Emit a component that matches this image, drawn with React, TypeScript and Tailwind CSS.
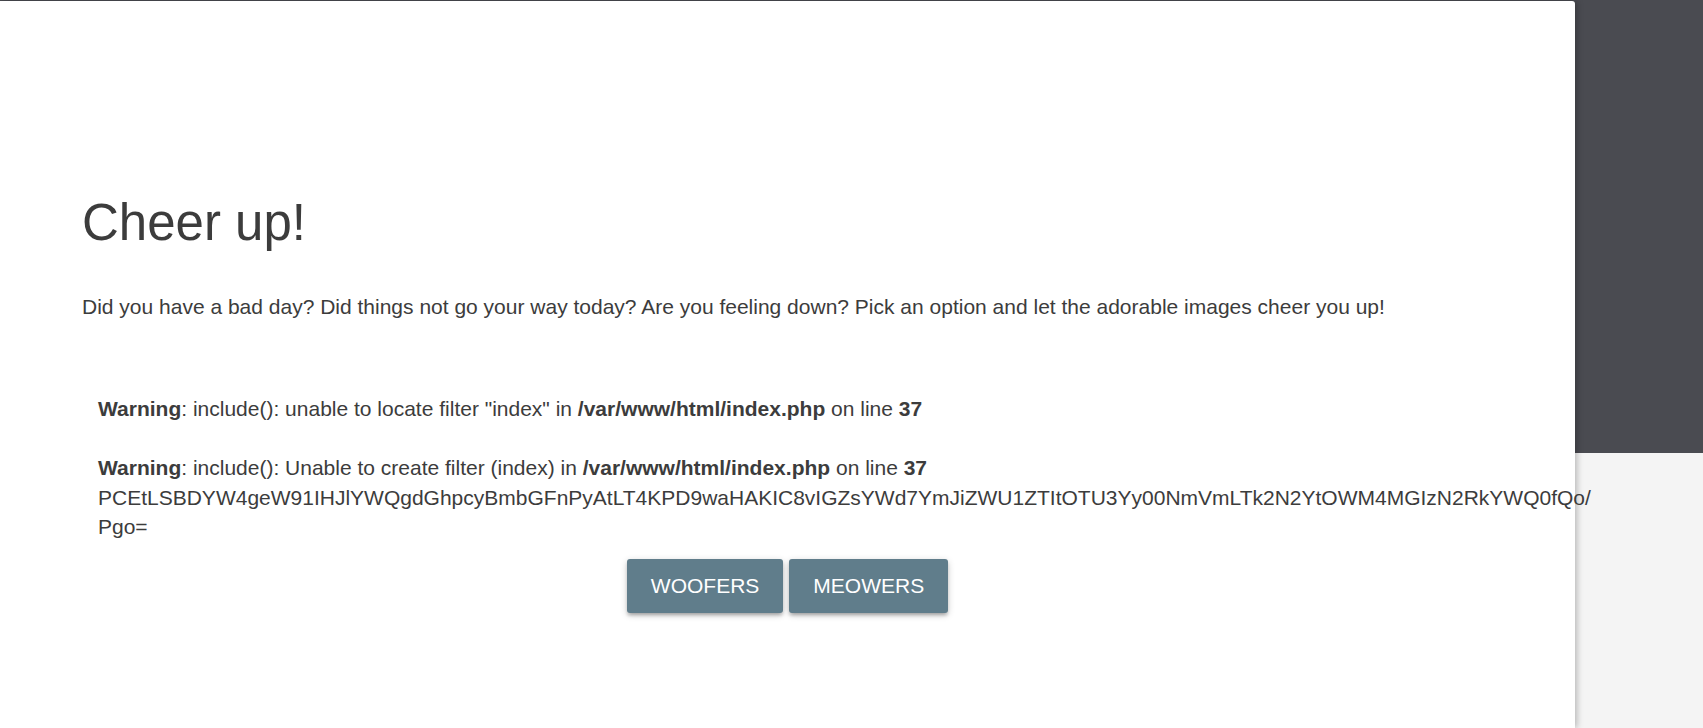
import React from 'react';

const flag =
  'PCEtLSBDYW4geW91IHJlYWQgdGhpcyBmbGFnPyAtLT4KPD9waHAKIC8vIGZsYWd7YmJiZWU1ZTItOTU3Yy00NmVmLTk2N2YtOWM4MGIzN2RkYWQ0fQo/';

const Warning: React.FC<{ text: string }> = ({ text }) => (
  <>
    <b className="font-bold">Warning</b>: {text} <b className="font-bold">/var/www/html/index.php</b> on line{' '}
    <b className="font-bold">37</b>
  </>
);

const App: React.FC = () => {
  return (
    <div className="h-[728px] overflow-hidden bg-[linear-gradient(#4a4b51_0px,#4a4b51_453px,#f4f4f4_453px)] pt-px font-['Liberation_Sans',Arial,sans-serif] text-[#3c3c3c]">
      <div className="h-full w-[1575px] rounded-tr-[3px] bg-white px-[82px] pt-[193px] shadow-[2px_0_6px_rgba(0,0,0,0.25)]">
        {/* Header */}
        <h1 className="text-[51px] leading-[57px] font-normal">Cheer up!</h1>
        <p className="mt-[41px] text-[21px] leading-[30px]">
          Did you have a bad day? Did things not go your way today? Are you feeling down? Pick an option and let the
          adorable images cheer you up!
        </p>

        {/* PHP output */}
        <div className="mt-[72px] ml-[16px] text-[21px] leading-[29.5px]">
          <Warning text={'include(): unable to locate filter "index" in'} />
          <br />
          <br />
          <Warning text="include(): Unable to create filter (index) in" />
          <br />
          <span className="whitespace-nowrap">{flag}</span>
          <br />
          Pgo=
        </div>

        <div className="mt-[17px] flex justify-center gap-[6px]">
          {['Woofers', 'Meowers'].map((label) => (
            <button
              key={label}
              className="h-[54px] rounded-[3px] bg-[#607d8b] px-[24px] text-[21px] uppercase text-white shadow-[0_3px_3px_0_rgba(0,0,0,0.14),0_4px_2px_-3px_rgba(0,0,0,0.12),0_2px_7px_0_rgba(0,0,0,0.2)]"
            >
              {label}
            </button>
          ))}
        </div>
      </div>
    </div>
  );
};

export default App;
